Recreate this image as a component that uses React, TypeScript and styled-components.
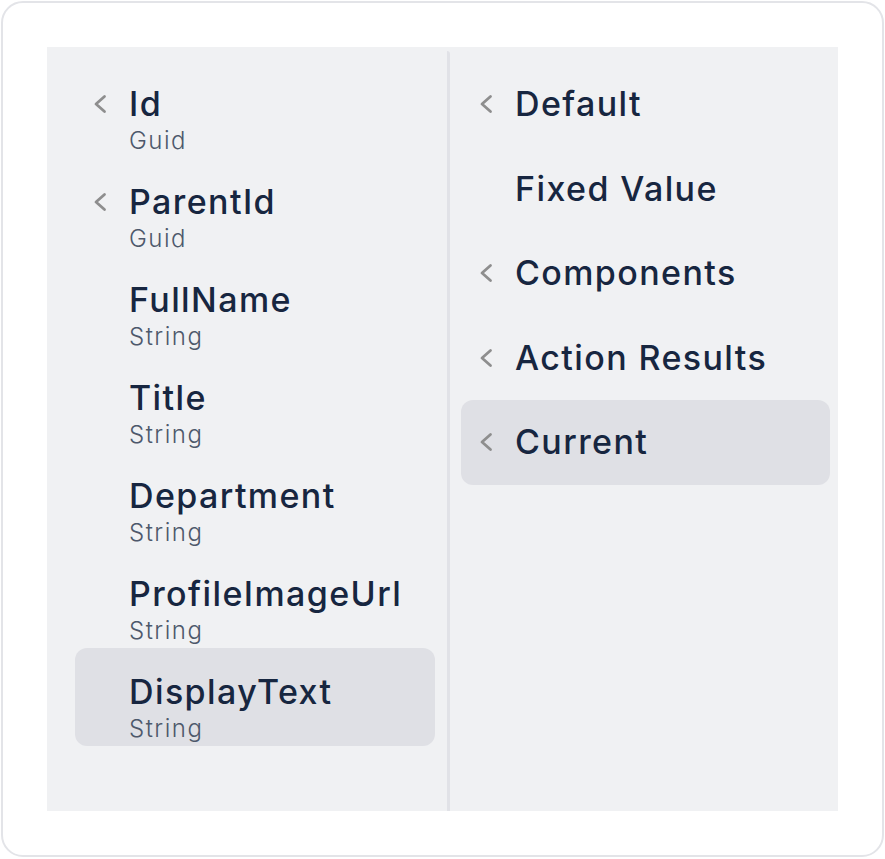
import React from "react";
import styled, { createGlobalStyle } from "styled-components";

const Global = createGlobalStyle`
  html, body { margin: 0; padding: 0; background: #ffffff; }
  body { font-family: Inter, "Noto Sans", "Liberation Sans", sans-serif; }
  * { box-sizing: border-box; }
`;

const Card = styled.div`
  margin: 1px;
  width: 883px;
  height: 856px;
  border: 2px solid #e3e4e8;
  border-radius: 22px;
  background: #ffffff;
  padding: 44px;
  display: flex;
`;

const Panel = styled.div`
  flex: 1;
  background: #f0f1f3;
  display: grid;
  grid-template-columns: 403px 1fr;
`;

const LeftColumn = styled.div`
  margin-top: 4px;
  border-right: 3px solid #e1e2e7;
  border-top-right-radius: 3px;
  padding: 9px 12px 0 28px;
  display: flex;
  flex-direction: column;
`;

const RightColumn = styled.div`
  padding: 15px 8px 0 11px;
  display: flex;
  flex-direction: column;
`;

const Item = styled.div<{ $active?: boolean; $tall?: boolean }>`
  display: grid;
  grid-template-columns: 36px 1fr;
  align-items: start;
  padding: ${(p) => (p.$tall ? "25px" : "23px")} 0 0 17px;
  height: ${(p) => (p.$tall ? "98px" : "84.5px")};
  border-radius: 12px;
  background: ${(p) => (p.$active ? "#dfe0e5" : "transparent")};
`;

const ChevronBox = styled.span`
  display: flex;
  align-items: center;
  height: 38px;
`;

const Texts = styled.div`
  display: flex;
  flex-direction: column;
  margin-left: 1px;
`;

const Title = styled.div`
  font-size: 34px;
  line-height: 38px;
  font-weight: 500;
  letter-spacing: 1.4px;
  color: #172640;
  white-space: nowrap;
`;

const Sub = styled.div`
  font-size: 24px;
  line-height: 30px;
  font-weight: 300;
  letter-spacing: 1.5px;
  color: #4d586b;
  margin-top: 3px;
`;

const Chevron = () => (
  <svg width="16" height="22" viewBox="0 0 16 22" fill="none">
    <polyline
      points="12.5,3.5 4,11 12.5,18.5"
      stroke="#8e8e8e"
      strokeWidth="2.8"
      strokeLinecap="round"
      strokeLinejoin="round"
    />
  </svg>
);

type Field = { name: string; type: string; expandable?: boolean; active?: boolean };

const fields: Field[] = [
  { name: "Id", type: "Guid", expandable: true },
  { name: "ParentId", type: "Guid", expandable: true },
  { name: "FullName", type: "String" },
  { name: "Title", type: "String" },
  { name: "Department", type: "String" },
  { name: "ProfileImageUrl", type: "String" },
  { name: "DisplayText", type: "String", active: true },
];

type Source = { name: string; expandable?: boolean; active?: boolean };

const sources: Source[] = [
  { name: "Default", expandable: true },
  { name: "Fixed Value" },
  { name: "Components", expandable: true },
  { name: "Action Results", expandable: true },
  { name: "Current", expandable: true, active: true },
];

export default function App() {
  return (
    <>
      <Global />
      <Card>
        <Panel>
          <LeftColumn>
            {fields.map((f) => (
              <Item key={f.name} $tall $active={f.active}>
                <ChevronBox>{f.expandable && <Chevron />}</ChevronBox>
                <Texts>
                  <Title>{f.name}</Title>
                  <Sub>{f.type}</Sub>
                </Texts>
              </Item>
            ))}
          </LeftColumn>
          <RightColumn>
            {sources.map((s) => (
              <Item key={s.name} $active={s.active}>
                <ChevronBox>{s.expandable && <Chevron />}</ChevronBox>
                <Texts>
                  <Title>{s.name}</Title>
                </Texts>
              </Item>
            ))}
          </RightColumn>
        </Panel>
      </Card>
    </>
  );
}
